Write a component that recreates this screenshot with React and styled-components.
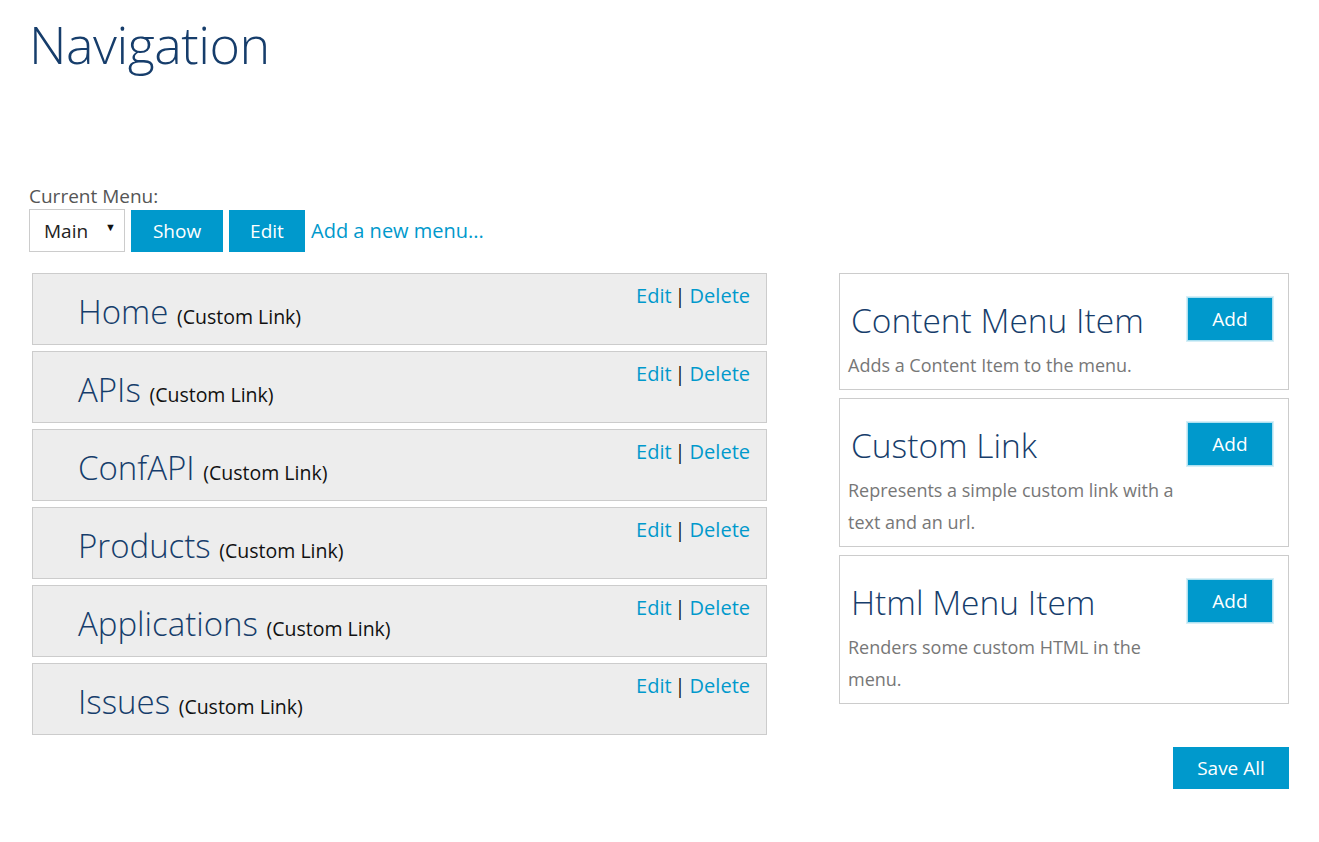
import React from 'react'
import styled, { createGlobalStyle } from 'styled-components'

const GlobalStyle = createGlobalStyle`
    body {
        margin: 0;
        background: #ffffff;
        font-family: "Open Sans", "Noto Sans", sans-serif;
        color: #333333;
    }
`

const items = ['Home', 'APIs', 'ConfAPI', 'Products', 'Applications', 'Issues']

const types = [
    { title: 'Content Menu Item', text: 'Adds a Content Item to the menu.' },
    { title: 'Custom Link', text: 'Represents a simple custom link with a text and an url.' },
    { title: 'Html Menu Item', text: 'Renders some custom HTML in the menu.' },
]

function App() {
    return (
        <Page>
            <GlobalStyle />
            <Title>Navigation</Title>
            <Label>Current Menu:</Label>
            <Toolbar>
                <Select>
                    Main <Caret>▼</Caret>
                </Select>
                <Button wide={92}>Show</Button>
                <Button wide={76}>Edit</Button>
                <TextLink>Add a new menu...</TextLink>
            </Toolbar>
            <Columns>
                <List>
                    {items.map(name => (
                        <Row key={name}>
                            <ItemName>
                                {name} <ItemType>(Custom Link)</ItemType>
                            </ItemName>
                            <Actions>
                                <TextLink>Edit</TextLink>
                                <Bar>|</Bar>
                                <TextLink>Delete</TextLink>
                            </Actions>
                        </Row>
                    ))}
                </List>
                <Side>
                    {types.map(t => (
                        <Card key={t.title}>
                            <CardTitle>{t.title}</CardTitle>
                            <AddButton>Add</AddButton>
                            <CardText>{t.text}</CardText>
                        </Card>
                    ))}
                    <Footer>
                        <Button wide={116}>Save All</Button>
                    </Footer>
                </Side>
            </Columns>
        </Page>
    )
}

const Page = styled.div`
    padding: 0 30px 40px 29px;
    width: 1260px;
`

const Title = styled.h1`
    margin: 0;
    padding-top: 7px;
    font-size: 52px;
    font-weight: 300;
    line-height: 74px;
    color: #163d6b;
    letter-spacing: -0.5px;
`

const Label = styled.div`
    margin-top: 102px;
    font-size: 19px;
    line-height: 26px;
    color: #555555;
`

const Toolbar = styled.div`
    display: flex;
    align-items: center;
    gap: 6px;
    height: 43px;
`

const Select = styled.div`
    box-sizing: border-box;
    display: flex;
    align-items: center;
    justify-content: space-between;
    width: 96px;
    height: 43px;
    padding: 0 8px 0 14px;
    border: 1px solid #cccccc;
    font-size: 19px;
    color: #222222;
`

const Caret = styled.span`
    font-size: 11px;
    margin-top: -8px;
    color: #111111;
`

const Button = styled.div`
    box-sizing: border-box;
    display: flex;
    align-items: center;
    justify-content: center;
    width: ${p => p.wide}px;
    height: 42px;
    background: #0099cc;
    color: #ffffff;
    font-size: 19px;
`

const TextLink = styled.span`
    color: #0099cc;
    font-size: 20px;
`

const Columns = styled.div`
    display: grid;
    grid-template-columns: 735px 450px;
    column-gap: 72px;
    margin-top: 21px;
    margin-left: 3px;
`

const List = styled.div`
    display: flex;
    flex-direction: column;
    gap: 6px;
`

const Row = styled.div`
    position: relative;
    box-sizing: border-box;
    height: 72px;
    padding: 16px 16px 0 45px;
    background: #ededed;
    border: 1px solid #cccccc;
`

const ItemName = styled.div`
    font-size: 33px;
    font-weight: 300;
    line-height: 44px;
    color: #163d6b;
`

const ItemType = styled.span`
    font-size: 19.5px;
    font-weight: 400;
    color: #111111;
`

const Actions = styled.div`
    position: absolute;
    top: 8px;
    right: 16px;
    display: flex;
    align-items: baseline;
`

const Bar = styled.span`
    margin: 0 4px 0 3px;
    font-size: 20px;
    color: #111111;
`

const Side = styled.div`
    display: flex;
    flex-direction: column;
    gap: 8px;
`

const Card = styled.div`
    box-sizing: border-box;
    display: grid;
    grid-template-columns: 1fr auto;
    column-gap: 8px;
    padding: 18px 15px 8px 8px;
    border: 1px solid #cccccc;
`

const CardTitle = styled.div`
    padding-left: 3px;
    font-size: 33.5px;
    font-weight: 300;
    line-height: 57px;
    color: #163d6b;
`

const AddButton = styled.div`
    grid-row: span 2;
    box-sizing: border-box;
    display: flex;
    align-items: center;
    justify-content: center;
    width: 86px;
    height: 44px;
    margin-top: 5px;
    background: #0099cc;
    border: 1px solid #ade0f0;
    outline: 1px solid #d6eff7;
    color: #ffffff;
    font-size: 19px;
`

const CardText = styled.div`
    font-size: 18px;
    line-height: 32px;
    color: #777777;
`

const Footer = styled.div`
    display: flex;
    justify-content: flex-end;
    margin-top: 35px;
`

export default App
